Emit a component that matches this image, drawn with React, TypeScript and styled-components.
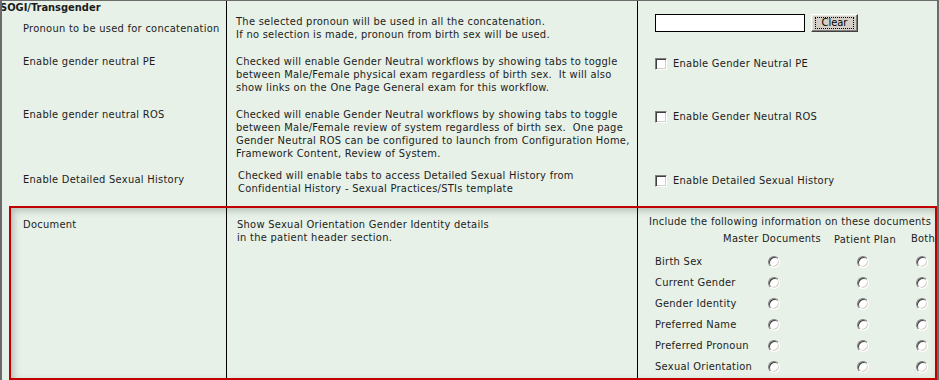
import styled, { createGlobalStyle } from 'styled-components';

const GlobalStyle = createGlobalStyle`
  html, body {
    margin: 0;
    padding: 0;
    background: #e7f1e7;
  }
  body {
    font-family: "DejaVu Sans Condensed", "DejaVu Sans", sans-serif;
    font-size: 11px;
    line-height: 13px;
    letter-spacing: 0.28px;
    color: #1c1c1c;
  }
`;

const rows = [
  {
    label: 'Pronoun to be used for concatenation',
    desc: [
      'The selected pronoun will be used in all the concatenation.',
      'If no selection is made, pronoun from birth sex will be used.',
    ],
  },
  {
    label: 'Enable gender neutral PE',
    check: 'Enable Gender Neutral PE',
    desc: [
      'Checked will enable Gender Neutral workflows by showing tabs to toggle',
      'between Male/Female physical exam regardless of birth sex.  It will also',
      'show links on the One Page General exam for this workflow.',
    ],
  },
  {
    label: 'Enable gender neutral ROS',
    check: 'Enable Gender Neutral ROS',
    desc: [
      'Checked will enable Gender Neutral workflows by showing tabs to toggle',
      'between Male/Female review of system regardless of birth sex.  One page',
      'Gender Neutral ROS can be configured to launch from Configuration Home,',
      'Framework Content, Review of System.',
    ],
  },
  {
    label: 'Enable Detailed Sexual History',
    check: 'Enable Detailed Sexual History',
    desc: [
      'Checked will enable tabs to access Detailed Sexual History from',
      'Confidential History - Sexual Practices/STIs template',
    ],
  },
];

// row height, label/desc top padding, desc indent, option top padding
const layout = [
  { height: 46, top: 21, indent: 9, descTop: 14, optTop: 13 },
  { height: 53, top: 8, indent: 9, descTop: 8, optTop: 10 },
  { height: 65, top: 8, indent: 9, descTop: 8, optTop: 10 },
  { height: 42, top: 8, indent: 11, descTop: 4, optTop: 9 },
];

const docFields = [
  'Birth Sex',
  'Current Gender',
  'Gender Identity',
  'Preferred Name',
  'Preferred Pronoun',
  'Sexual Orientation',
];

const App = () => {
  return (
    <>
      <GlobalStyle />
      <Page>
        {rows.map((row, i) => {
          const l = layout[i];
          return (
            <Row key={row.label} $height={l.height}>
              <LabelCell $top={i === 0 ? 0 : l.top}>
                {i === 0 && <Title>SOGI/Transgender</Title>}
                <Label $gap={i === 0 ? l.top - 13 : 0}>{row.label}</Label>
              </LabelCell>
              <DescCell $top={l.descTop} $indent={l.indent}>
                {row.desc.map(line => (
                  <Line key={line}>{line}</Line>
                ))}
              </DescCell>
              <OptionCell $top={l.optTop}>
                {row.check ? (
                  <CheckRow>
                    <Checkbox type="checkbox" />
                    <span>{row.check}</span>
                  </CheckRow>
                ) : (
                  <InputRow>
                    <TextInput type="text" />
                    <ClearButton type="button">
                      <FocusRing>Clear</FocusRing>
                    </ClearButton>
                  </InputRow>
                )}
              </OptionCell>
            </Row>
          );
        })}

        <Row $height={173}>
          <LabelCell $top={11}>
            <Label $gap={0}>Document</Label>
          </LabelCell>
          <DescCell $top={11} $indent={10}>
            <Line>Show Sexual Orientation Gender Identity details</Line>
            <Line>in the patient header section.</Line>
          </DescCell>
          <DocCell>
            <Line>Include the following information on these documents</Line>
            <HeaderGrid>
              <span />
              <HeaderText>Master Documents</HeaderText>
              <HeaderText $shift={1}>Patient Plan</HeaderText>
              <HeaderText>Both</HeaderText>
            </HeaderGrid>
            <RadioTable>
              {docFields.map(field => (
                <RadioRow key={field}>
                  <FieldName>{field}</FieldName>
                  <Radio type="radio" name={field} />
                  <span />
                  <Radio type="radio" name={field} />
                  <span />
                  <Radio type="radio" name={field} />
                </RadioRow>
              ))}
            </RadioTable>
          </DocCell>
        </Row>

        <Highlight />
      </Page>
    </>
  );
};

const Page = styled.div`
  position: relative;
  width: 939px;
  height: 380px;
  box-sizing: border-box;
  border-top: 1px solid #6b6b6b;
  border-left: 2px solid #6b6b6b;
  border-right: 2px solid #6b6b6b;
  overflow: hidden;
`;

const Row = styled.div<{ $height: number }>`
  display: grid;
  grid-template-columns: 224px 411px 300px;
  height: ${props => props.$height}px;
`;

const LabelCell = styled.div<{ $top: number }>`
  padding: ${props => props.$top}px 0 0 21px;
`;

const Title = styled.div`
  margin-left: -23px;
  font-weight: bold;
  letter-spacing: 0;
  white-space: nowrap;
`;

const Label = styled.div<{ $gap: number }>`
  margin-top: ${props => props.$gap}px;
  white-space: nowrap;
`;

const DescCell = styled.div<{ $top: number; $indent: number }>`
  border-left: 1px solid #000;
  padding: ${props => props.$top}px 0 0 ${props => props.$indent}px;
`;

const Line = styled.div`
  white-space: pre;
`;

const OptionCell = styled.div<{ $top: number }>`
  border-left: 1px solid #000;
  padding: ${props => props.$top}px 0 0 17px;
`;

const InputRow = styled.div`
  display: flex;
  align-items: flex-start;
  gap: 6px;
`;

const TextInput = styled.input`
  box-sizing: border-box;
  width: 150px;
  height: 18px;
  margin: 0;
  padding: 0 2px;
  border: 1px solid #000;
  background: #fff;
  font: inherit;
  outline: none;
`;

const ClearButton = styled.button`
  box-sizing: border-box;
  width: 47px;
  height: 18px;
  margin: 0;
  padding: 2px 3px;
  display: flex;
  align-items: stretch;
  background: #d4d0c8;
  border: 1px solid;
  border-color: #fff #404040 #404040 #fff;
  box-shadow: inset -1px -1px #808080, inset 1px 1px #e8e6e1;
  font: inherit;
  color: #000;
`;

const FocusRing = styled.span`
  flex: 1;
  border: 1px dotted #000;
  line-height: 10px;
  text-align: center;
`;

const CheckRow = styled.label`
  display: flex;
  align-items: center;
  gap: 6px;
  height: 13px;
  white-space: nowrap;
`;

const Checkbox = styled.input`
  appearance: none;
  box-sizing: border-box;
  width: 12px;
  height: 12px;
  margin: 0;
  background: #fff;
  border: 1px solid;
  border-color: #808080 #fff #fff #808080;
  box-shadow: inset 1px 1px #404040, inset -1px -1px #d4d0c8;
`;

const DocCell = styled.div`
  border-left: 1px solid #000;
  padding: 8px 0 0 11px;
`;

const HeaderGrid = styled.div`
  display: grid;
  grid-template-columns: 69px 108px 78px 38px;
  margin-top: 4px;
  white-space: nowrap;
`;

const HeaderText = styled.span<{ $shift?: number }>`
  text-align: center;
  transform: translateY(${props => props.$shift || 0}px);
`;

const RadioTable = styled.div`
  margin-top: 6px;
`;

const RadioRow = styled.div`
  display: grid;
  grid-template-columns: 119px 13px 76px 13px 46px 13px;
  align-items: center;
  height: 21px;
`;

const FieldName = styled.span`
  padding-left: 6px;
  white-space: nowrap;
`;

const Radio = styled.input`
  appearance: none;
  box-sizing: border-box;
  width: 12px;
  height: 12px;
  margin: 0;
  border-radius: 50%;
  background: #fff;
  border: 1px solid;
  border-color: #808080 #fff #fff #808080;
  box-shadow: inset 1px 1px #404040, inset -1px -1px #d4d0c8;
`;

const Highlight = styled.div`
  position: absolute;
  left: 7px;
  top: 205px;
  width: 928px;
  height: 174px;
  box-sizing: border-box;
  border: 2px solid #c00000;
  box-shadow: inset 3px 3px 6px rgba(60, 70, 60, 0.28);
  pointer-events: none;
`;

export default App;
